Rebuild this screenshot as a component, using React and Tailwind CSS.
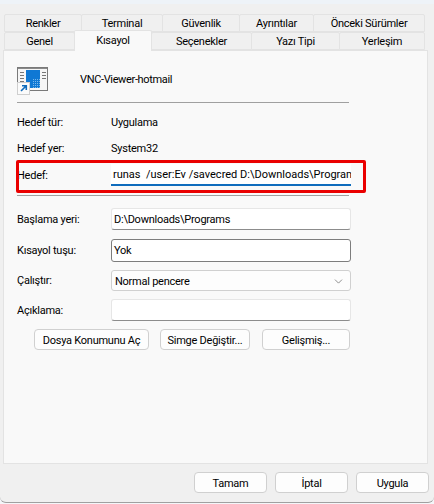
import React from "react";
import { ChevronDown } from "lucide-react";

const topTabs = [
  { label: "Renkler", width: "w-[78px]" },
  { label: "Terminal", width: "w-[82px]" },
  { label: "Güvenlik", width: "w-[78px]" },
  { label: "Ayrıntılar", width: "w-[75px]" },
  { label: "Önceki Sürümler", width: "w-[112px]" },
];

const bottomTabs = [
  { label: "Genel", width: "w-[71px]" },
  { label: "Kısayol", width: "w-[78px]", active: true },
  { label: "Seçenekler", width: "w-[101px]" },
  { label: "Yazı Tipi", width: "w-[89px]" },
  { label: "Yerleşim", width: "w-[86px]" },
];

const Tab = ({ label, width, active }) => (
  <div
    className={`${width} flex items-center justify-center border border-[#e3e3e3] rounded-t-[2px] -ml-px first:ml-0 ${
      active
        ? "h-[21px] -mb-px pb-[2px] bg-[#f9f9f9] border-b-0 relative"
        : "h-[18px] pt-[1px] bg-[#f0f0f0]"
    }`}
  >
    {label}
  </div>
);

const Row = ({ label, className, children }) => (
  <div className={`flex items-center ${className}`}>
    <div className="w-[94px] shrink-0">{label}</div>
    {children}
  </div>
);

const inputBox = "w-[240px] h-[22px] flex items-center px-[2px] bg-white rounded-[3px] border border-[#e6e6e6] border-b-[#8c8c8c] overflow-hidden whitespace-nowrap";
const btn = "h-[21px] pt-[1px] flex items-center justify-center whitespace-nowrap bg-[#fdfdfd] border border-[#d0d0d0] rounded-[4px]";

const ShortcutIcon = () => (
  <svg width="32" height="28" viewBox="0 0 32 28" className="block shrink-0">
    <defs>
      <pattern id="dither" width="2" height="2" patternUnits="userSpaceOnUse">
        <rect width="2" height="2" fill="#0f78d4" />
        <rect width="1" height="1" fill="#7ab8ea" />
      </pattern>
    </defs>
    <rect x="0.5" y="0.5" width="30" height="23" fill="#f6f6f6" stroke="#7a7a7a" />
    <path d="M1 1.5h29" stroke="#8a8a8a" />
    <rect x="9" y="3" width="14" height="18" fill="#0f78d4" />
    <rect x="16" y="11" width="7" height="10" fill="url(#dither)" />
    <path d="M3 5.5h4M3 8.5h4M3 11.5h4M3 14.5h4M25 5.5h4M25 8.5h4M25 11.5h4" stroke="#777" />
    <rect x="0.5" y="15.5" width="12" height="12" fill="#fbfbfb" stroke="#cfcfcf" />
    <path d="M4 24l5-5M5 18.7h4.3v4.3" stroke="#0f6cbd" strokeWidth="1.6" fill="none" />
  </svg>
);

export default function App() {
  return (
    <div className="w-[434px] h-[504px] overflow-hidden bg-[#f4f6f9] text-[11px] leading-none tracking-[-0.25px] text-black relative font-['Roboto','Noto_Sans',sans-serif]">
      <div className="h-[4px] bg-[#eef3f8]" />
      <div className="h-[499px] flex flex-col bg-[#f0f0f0] border-b border-[#a0a0a0] rounded-b-[6px] pl-[3px] pr-[5px]">
        <div className="pt-[10px] pl-[1px]">
          <div className="flex">
            {topTabs.map((t) => (
              <Tab key={t.label} {...t} />
            ))}
          </div>
          <div className="flex items-end h-[18px]">
            {bottomTabs.map((t) => (
              <Tab key={t.label} {...t} />
            ))}
          </div>
        </div>

        <div className="h-[414px] w-[425px] bg-[#f9f9f9] border border-[#e3e3e3] pl-[13px]">
          <div className="w-[332px] h-[52px] flex items-start gap-[31px] border-b border-[#a0a0a0] pt-[16px]">
            <ShortcutIcon />
            <div className="mt-[7px] tracking-[-0.35px]">VNC-Viewer-hotmail</div>
          </div>

          <Row label="Hedef tür:" className="mt-[10px] h-[18px]">
            <span>Uygulama</span>
          </Row>
          <Row label="Hedef yer:" className="mt-[8px] h-[18px]">
            <span>System32</span>
          </Row>
          <Row label="Hedef:" className="mt-[7px]">
            <div className="w-[240px] h-[22px] flex items-center pl-[2px] tracking-normal bg-white border-b-2 border-[#0f6cbd] overflow-hidden whitespace-nowrap">
              runas&nbsp; /user:Ev /savecred D:\Downloads\Programs
            </div>
          </Row>
          <div className="w-[332px] mt-[9px] border-b border-[#a0a0a0]" />

          <Row label="Başlama yeri:" className="mt-[12px]">
            <div className={inputBox}>D:\Downloads\Programs</div>
          </Row>
          <Row label="Kısayol tuşu:" className="mt-[9px]">
            <div className="w-[240px] h-[23px] flex items-center px-[2px] bg-white rounded-[3px] border border-[#7d7d7d]">Yok</div>
          </Row>
          <Row label="Çalıştır:" className="mt-[8px]">
            <div className="w-[240px] h-[21px] pt-[1px] flex items-center justify-between pl-[3px] pr-[5px] bg-[#fdfdfd] rounded-[3px] border border-[#d0d0d0]">
              <span>Normal pencere</span>
              <ChevronDown size={13} strokeWidth={1.2} className="text-[#555]" />
            </div>
          </Row>
          <Row label="Açıklama:" className="mt-[8px]">
            <div className={inputBox} />
          </Row>

          <div className="flex mt-[8px] ml-[17px]">
            <div className={`${btn} w-[115px]`}>Dosya Konumunu Aç</div>
            <div className={`${btn} w-[90px] ml-[11px]`}>Simge Değiştir...</div>
            <div className={`${btn} w-[88px] ml-[12px]`}>Gelişmiş...</div>
          </div>
        </div>

        <div className="flex justify-end gap-[8px] mt-[8px]">
          <div className={`${btn} w-[73px]`}>Tamam</div>
          <div className={`${btn} w-[73px]`}>İptal</div>
          <div className={`${btn} w-[73px]`}>Uygula</div>
        </div>
      </div>

      {/* red annotation drawn over the Hedef row */}
      <div className="absolute left-[16px] top-[160px] w-[350px] h-[33px] border-[3px] border-[#ea0000] rounded-[2px] pointer-events-none" />
    </div>
  );
}
